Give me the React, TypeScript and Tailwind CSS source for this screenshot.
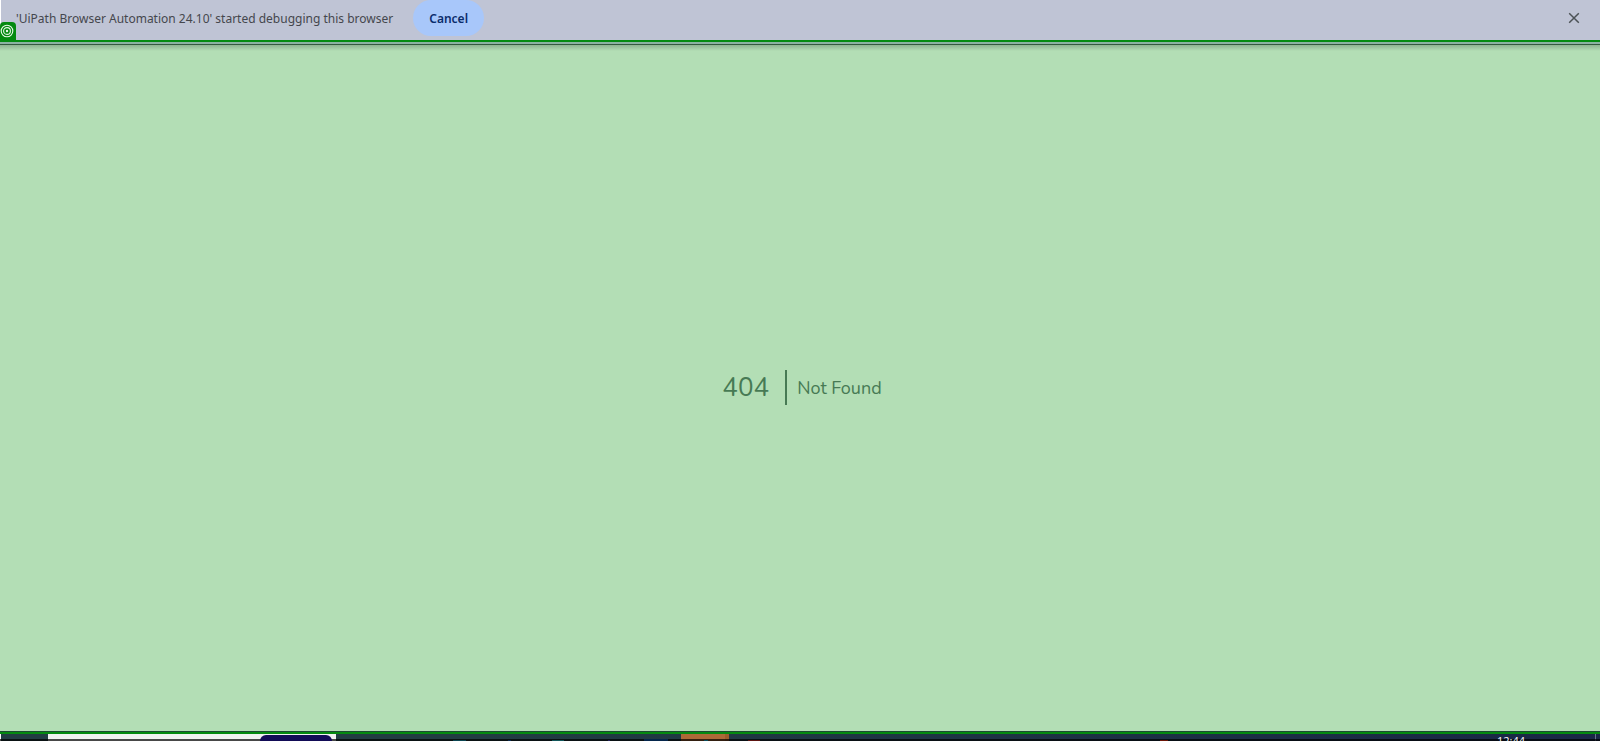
function TargetIcon() {
  return (
    <svg viewBox="0 0 14 14" className="size-3.5" fill="none" stroke="#e8f8e8" aria-hidden="true">
      <circle cx="7" cy="7" r="5.8" strokeWidth="1.1" />
      <circle cx="7" cy="7" r="3.4" strokeWidth="1.1" />
      <circle cx="7" cy="7" r="1.2" fill="#e8f8e8" stroke="none" />
    </svg>
  );
}

function InfoBar() {
  return (
    <header className="relative flex h-10 items-start border-l border-white bg-[#bfc4d5] pr-[19px] pl-[15px] font-['Noto_Sans','Open_Sans',sans-serif] text-[12px]">
      <p className="flex h-9 items-center pt-0.5 whitespace-nowrap text-[#45474d]">
        'UiPath Browser Automation 24.10' started debugging this browser
      </p>
      <button
        type="button"
        className="ml-5 flex h-9 w-[71px] items-center justify-center rounded-full bg-[#a8c7fa] pt-0.5 font-semibold text-[#0b2c6b]"
      >
        Cancel
      </button>
      <button type="button" aria-label="Close" className="ml-auto flex h-9 items-center text-[#4c5256]">
        <svg viewBox="0 0 14 14" className="size-3.5" fill="none" stroke="currentColor" strokeWidth="1.5" aria-hidden="true">
          <path d="M2.2 2.2l9.6 9.6M11.8 2.2l-9.6 9.6" />
        </svg>
      </button>
      <div className="absolute bottom-0 -left-px flex h-[18px] w-4 items-center rounded-t-sm bg-[#048a10]">
        <TargetIcon />
      </div>
    </header>
  );
}

function TaskIcons() {
  return (
    <svg viewBox="0 0 1600 2" preserveAspectRatio="none" className="absolute inset-x-0 bottom-0 h-0.5 w-full" aria-hidden="true">
      <path d="M453 1h13v1h-13z" fill="#0c4652" />
      <path d="M508 1h3v1h-3z" fill="#0b2a52" />
      <path d="M552 1h12v1h-12z" fill="#12565a" />
      <path d="M608 1h2v1h-2z" fill="#22205c" />
      <path d="M644 0h24v2h-24z" fill="#05264c" />
      <path d="M704 1h4v1h-4z" fill="#0a4a5a" />
      <path d="M748 1h12v1h-12z" fill="#5c1512" />
      <path d="M1160 1h8v1h-8z" fill="#6b1608" />
    </svg>
  );
}

function TaskBar() {
  return (
    <footer className="flex h-2.5 flex-col overflow-hidden bg-[#1d4a33]">
      <div className="mt-px h-0.5 shrink-0 bg-[#048a10]" />
      <div className="relative flex h-[7px] shrink-0 bg-linear-to-r from-[#223c42] from-30% to-[#1a2746]">
        <div className="w-12 border-l border-white bg-[#223c42]" />
        <div className="flex w-72 justify-end bg-[#f2f2f2] pt-px pr-1">
          <div className="z-10 w-[72px] rounded-t-md bg-[#120b56]" />
        </div>
        <div className="ml-[345px] w-12 border-r-4 border-[#9c5c2c] bg-[#ac6937]" />
        <time className="z-10 mr-[70px] ml-auto h-[7px] overflow-hidden pt-[2px] font-['Open_Sans',sans-serif] text-[11px] leading-[10px] text-white">
          12:44
        </time>
        <div className="mr-1 w-px bg-[#68738a]" />
        <div className="absolute inset-x-0 bottom-0 h-0.5 bg-black/70" />
        <TaskIcons />
      </div>
    </footer>
  );
}

export default function App() {
  return (
    <div className="flex h-screen flex-col overflow-hidden bg-[#b3deb5]">
      <InfoBar />
      <div className="h-0.5 shrink-0 bg-[#048a10]" />
      <div className="h-[3px] shrink-0 border-b border-[#35593f] bg-[#8cb2a2]" />
      <div className="h-1.5 shrink-0 bg-linear-to-b from-[#8fb391] to-[#b3deb5]" />
      <main className="flex grow items-center justify-center pb-2 pl-1 font-['Nunito','Lato',sans-serif] text-[#477a54]">
        <h1 className="border-r-2 border-[#477a54] pr-4 text-[26px] leading-[35px]">404</h1>
        <p className="pt-0.5 pl-2.5 text-[18px] leading-[35px]">Not Found</p>
      </main>
      <TaskBar />
    </div>
  );
}
